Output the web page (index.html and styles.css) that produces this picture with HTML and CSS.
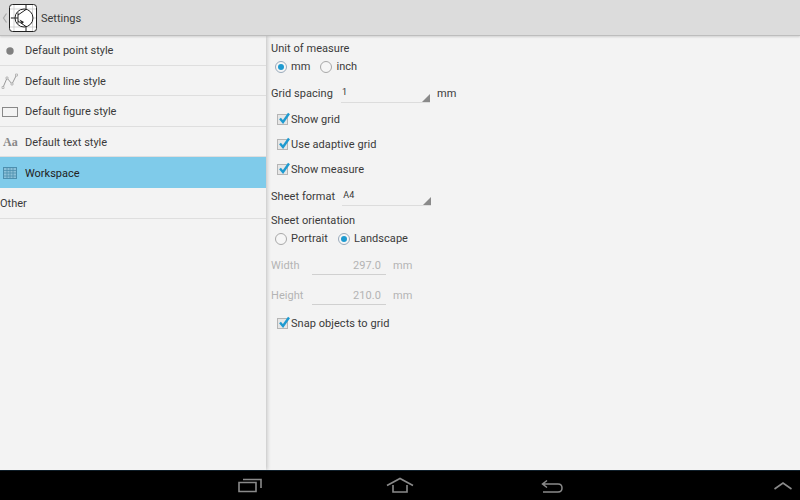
FILE: index.html
```html
<!DOCTYPE html>
<html>
<head>
<meta charset="utf-8">
<title>Settings</title>
<link rel="stylesheet" href="styles.css">
</head>
<body>
<div class="screen">
  <header class="bar">
    <svg class="back" width="6" height="12" viewBox="0 0 6 12"><path d="M4.5 1.5 L1.5 6 L4.5 10.5" fill="none" stroke="#aaa" stroke-width="1.2"/></svg>
    <svg class="logo" width="28" height="28" viewBox="0 0 28 28">
      <rect x="0.5" y="0.5" width="27" height="27" rx="3" fill="#fff" stroke="#222"/>
      <path d="M5 1V27M23.500 1V27M1 5H27M1 23H27M1 14H4M24 14H27" stroke="#c4c4c4" stroke-width="0.7"/>
      <circle cx="15" cy="14" r="9" fill="none" stroke="#222" stroke-width="1"/>
      <path d="M2 14H9M9 8.500V19.500M9 11L17 5.500V1M9 17L17 22.500V27" fill="none" stroke="#222" stroke-width="1"/>
      <path d="M10.500 15.500L15 18L13 20Z" fill="#222"/>
    </svg>
    <span class="title">Settings</span>
  </header>
  <main class="main">
    <nav class="side">
      <div class="row r30">
        <span class="ico"><svg width="18" height="18" viewBox="0 0 18 18"><circle cx="10" cy="9" r="3.7" fill="#808080"/></svg></span>
        <span>Default point style</span>
      </div>
      <div class="row r30">
        <span class="ico"><svg width="18" height="18" viewBox="0 0 18 18"><path d="M3 15.5L7 6L12 12L16.5 3" fill="none" stroke="#999" stroke-width="1"/><path d="M2 14.5h2v2h-2zM6 5h2v2h-2zM11 11h2v2h-2zM15.5 2h2v2h-2z" fill="#f3f3f3" stroke="#a5a5a5" stroke-width="0.7"/></svg></span>
        <span>Default line style</span>
      </div>
      <div class="row r31">
        <span class="ico"><svg width="18" height="18" viewBox="0 0 18 18"><rect x="2.5" y="4.5" width="15" height="9" fill="none" stroke="#888"/></svg></span>
        <span>Default figure style</span>
      </div>
      <div class="row r30">
        <span class="ico aa">Aa</span>
        <span>Default text style</span>
      </div>
      <div class="row r31 sel">
        <span class="ico"><svg width="18" height="18" viewBox="0 0 18 18"><rect x="3.5" y="3.5" width="13" height="11" fill="#8cc0d8" stroke="#4d8fae"/><path d="M3.5 6.5H16.5M3.5 9H16.5M3.5 12H16.5M7 3.5V14.5M10 3.5V14.5M13 3.5V14.5" stroke="#4d8fae" stroke-width="0.8"/></svg></span>
        <span>Workspace</span>
      </div>
      <div class="row r31 plain"><span>Other</span></div>
    </nav>
    <section class="pane">
      <div class="lbl first">Unit of measure</div>
      <div class="radios">
        <span class="opt"><span class="radio on"></span><span>mm</span></span>
        <span class="opt"><span class="radio"></span><span>inch</span></span>
      </div>
      <div class="field grid-f">
        <span>Grid spacing</span>
        <span class="spin w-grid"><span>1</span></span>
        <span class="unit">mm</span>
      </div>
      <div class="checks">
        <div class="chk"><span class="box"><svg width="14" height="14" viewBox="0 0 14 14"><path d="M3 6.500L6 10L12 1.500" fill="none" stroke="#1e9ad0" stroke-width="2.400"/></svg></span><span>Show grid</span></div>
        <div class="chk"><span class="box"><svg width="14" height="14" viewBox="0 0 14 14"><path d="M3 6.500L6 10L12 1.500" fill="none" stroke="#1e9ad0" stroke-width="2.400"/></svg></span><span>Use adaptive grid</span></div>
        <div class="chk"><span class="box"><svg width="14" height="14" viewBox="0 0 14 14"><path d="M3 6.500L6 10L12 1.500" fill="none" stroke="#1e9ad0" stroke-width="2.400"/></svg></span><span>Show measure</span></div>
      </div>
      <div class="field sheet-f">
        <span>Sheet format</span>
        <span class="spin w-sheet"><span>A4</span></span>
      </div>
      <div class="lbl orient">Sheet orientation</div>
      <div class="radios">
        <span class="opt"><span class="radio"></span><span>Portrait</span></span>
        <span class="opt"><span class="radio on"></span><span>Landscape</span></span>
      </div>
      <div class="dim first-dim"><span class="dim-l">Width</span><span class="input">297.0</span><span>mm</span></div>
      <div class="dim"><span class="dim-l">Height</span><span class="input">210.0</span><span>mm</span></div>
      <div class="chk snap"><span class="box"><svg width="14" height="14" viewBox="0 0 14 14"><path d="M3 6.500L6 10L12 1.500" fill="none" stroke="#1e9ad0" stroke-width="2.400"/></svg></span><span>Snap objects to grid</span></div>
    </section>
  </main>
  <footer class="nav">
    <svg class="n-recent" width="24" height="16" viewBox="0 0 24 16"><path d="M1 5.500H18V14.500H1Z M5 2.500H23V11" fill="none" stroke="#8a8a8a" stroke-width="1.600"/></svg>
    <svg class="n-home" width="28" height="16" viewBox="0 0 28 16"><path d="M1 8.500L14 1.500L27 8.500M7 8V15H21V8" fill="none" stroke="#8a8a8a" stroke-width="1.600"/></svg>
    <svg class="n-back" width="22" height="16" viewBox="0 0 22 16"><path d="M2 5H17Q21 5 21 9Q21 13 17 13H2M6 1.500L1.500 5L6 8.500" fill="none" stroke="#8a8a8a" stroke-width="1.500"/></svg>
    <svg class="n-up" width="20" height="10" viewBox="0 0 20 10"><path d="M1.500 8L10 2L18.500 8" fill="none" stroke="#8a8a8a" stroke-width="1.600"/></svg>
  </footer>
</div>
</body>
</html>
```
FILE: styles.css
```css
* { box-sizing: border-box; }
html, body { margin: 0; padding: 0; }
body { font-family: Roboto, "Liberation Sans", sans-serif; font-size: 11px; color: #3a3a3a; }
.screen { width: 800px; height: 500px; display: flex; flex-direction: column; overflow: hidden; background: #f3f3f3; }
.bar { height: 36px; flex: none; display: flex; align-items: center; background: #dcdcdc; border-bottom: 1px solid #bdbdbd; padding-left: 2px; box-shadow: 0 1px 2px rgba(0,0,0,.15); position: relative; z-index: 2; }
.back { margin-right: 1px; }
.logo { margin-right: 4px; }
.title { font-size: 11px; color: #3a3a3a; padding-top: 1px; }
.main { flex: 1; display: flex; min-height: 0; }
.side { width: 266px; flex: none; background: #f3f3f3; box-shadow: 1px 0 4px rgba(0,0,0,.22); position: relative; z-index: 1; }
.row { display: flex; align-items: center; border-bottom: 1px solid #dedede; padding-top: 1px; }
.row:first-child { padding-top: 0; }
.r30 { height: 30px; }
.r31 { height: 31px; }
.ico { width: 25px; flex: none; display: flex; align-items: center; justify-content: flex-start; }
.aa { font-family: "Liberation Serif", serif; font-size: 12px; color: #888; font-weight: bold; padding-left: 3px; }
.sel { background: #7fcbea; border-bottom: none; color: #222; }
.pane { flex: 1; padding: 0 0 0 5px; letter-spacing: .05px; }
.lbl { line-height: 14px; }
.lbl.first { margin-top: 6px; }
.radios { display: flex; height: 20px; align-items: center; padding: 1px 0 0 4px; gap: 10px; }
.opt { display: flex; align-items: center; gap: 4px; }
.radio { width: 12px; height: 12px; border-radius: 50%; border: 1px solid #a8a8a8; position: relative; flex: none; background: #f6f6f6; }
.radio.on { border-color: #9ab; }
.radio.on::after { content: ""; position: absolute; left: 2px; top: 2px; width: 6px; height: 6px; border-radius: 50%; background: #1e9ad0; }
.field { display: flex; align-items: center; height: 20px; }
.grid-f { margin-top: 7px; }
.sheet-f { margin-top: 4px; }
.spin { height: 20px; border-bottom: 1px solid #dcdcdc; position: relative; font-size: 9px; padding-left: 1px; display: flex; align-items: center; padding-bottom: 2px; color: #333; }
.spin::after { content: ""; position: absolute; right: 0; bottom: 0; width: 0; height: 0; border-left: 8px solid transparent; border-bottom: 8px solid #8a8a8a; }
.w-grid { width: 89px; margin-left: 8px; }
.w-sheet { width: 89px; margin-left: 7px; }
.unit { margin-left: 7px; }
.checks { margin-top: 4px; }
.chk { display: flex; align-items: center; height: 25px; padding-left: 6px; gap: 3px; }
.box { width: 11px; height: 11px; border: 1px solid #b5b5b5; background: #e6e6e6; display: block; position: relative; flex: none; }
.box svg { position: absolute; left: -1px; top: -3px; }
.orient { margin-top: 8px; }
.dim { display: flex; align-items: center; height: 30px; color: #b4b4b4; }
.first-dim { margin-top: 2px; }
.dim-l { width: 41px; }
.input { width: 74px; height: 20px; line-height: 21px; border-bottom: 1px solid #d0d0d0; text-align: right; padding-right: 5px; margin-right: 7px; }
.snap { margin-top: 1px; }
.nav { height: 30px; flex: none; background: #000; border-top: 1px solid #10202c; position: relative; }
.nav svg { position: absolute; }
.n-recent { left: 238px; top: 6px; }
.n-home { left: 386px; top: 6px; }
.n-back { left: 541px; top: 8px; }
.n-up { left: 773px; top: 10px; }
```
